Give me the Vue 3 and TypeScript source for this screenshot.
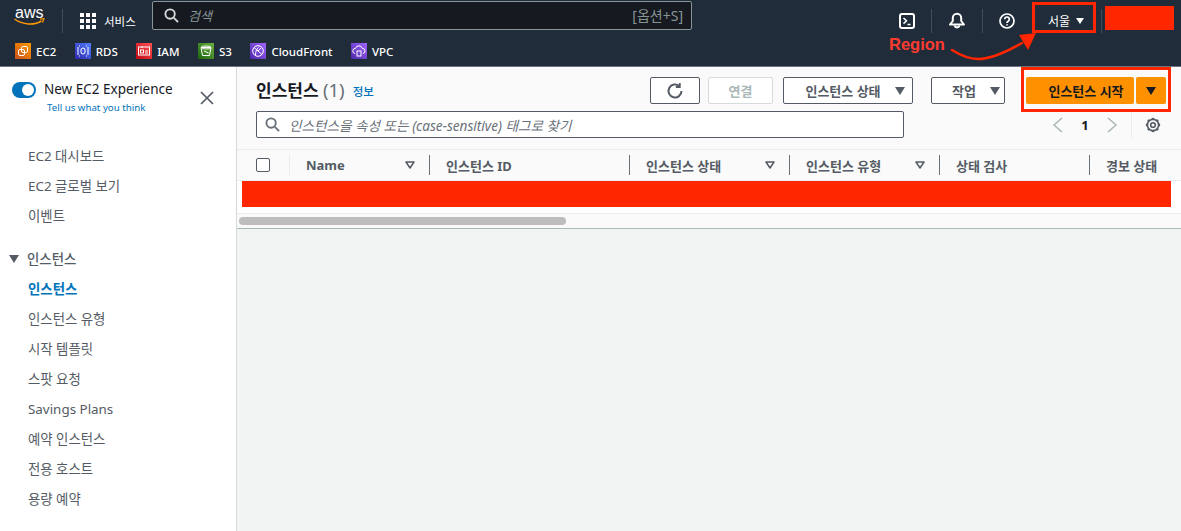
<script setup lang="ts">
interface Fav { label: string; from: string; to: string; kind: string }
const favs: Fav[] = [
  { label: 'EC2', from: '#c8511b', to: '#ff9900', kind: 'ec2' },
  { label: 'RDS', from: '#2e27ad', to: '#527fff', kind: 'rds' },
  { label: 'IAM', from: '#bd0816', to: '#ff5252', kind: 'iam' },
  { label: 'S3', from: '#1b660f', to: '#6cae3e', kind: 's3' },
  { label: 'CloudFront', from: '#4d27a8', to: '#a166ff', kind: 'cf' },
  { label: 'VPC', from: '#4d27a8', to: '#a166ff', kind: 'vpc' },
]
const navTop = ['EC2 대시보드', 'EC2 글로벌 보기', '이벤트']
const navInst = ['인스턴스 유형', '시작 템플릿', '스팟 요청', 'Savings Plans', '예약 인스턴스', '전용 호스트', '용량 예약']
const cols = [
  { label: 'Name', w: 140, sort: true },
  { label: '인스턴스 ID', w: 200, sort: false },
  { label: '인스턴스 상태', w: 160, sort: true },
  { label: '인스턴스 유형', w: 150, sort: true },
  { label: '상태 검사', w: 150, sort: false },
  { label: '경보 상태', w: 82, sort: false },
]
const gearTeeth = [0, 45, 90, 135, 180, 225, 270, 315]
</script>

<template>
  <div class="page">
    <header class="top">
      <div class="bar1">
        <svg class="aws" width="32" height="26" viewBox="0 0 32 26">
          <text x="1" y="14.500" class="awstext">aws</text>
          <path d="M.5 16c8 6 20 6.500 27 2" fill="none" stroke="#f90" stroke-width="1.500" />
          <path d="M26 16.200l4-.5-1.500 3.800" fill="none" stroke="#f90" stroke-width="1.200" />
        </svg>
        <span class="vsep sep1"></span>
        <svg class="grid" width="16" height="16" viewBox="0 0 16 16" fill="#fff">
          <rect x="0" y="0" width="4" height="4" /><rect x="6" y="0" width="4" height="4" /><rect x="12" y="0" width="4" height="4" />
          <rect x="0" y="6" width="4" height="4" /><rect x="6" y="6" width="4" height="4" /><rect x="12" y="6" width="4" height="4" />
          <rect x="0" y="12" width="4" height="4" /><rect x="6" y="12" width="4" height="4" /><rect x="12" y="12" width="4" height="4" />
        </svg>
        <span class="svc">서비스</span>
        <div class="gsearch">
          <svg width="15" height="15" viewBox="0 0 16 16" fill="none" stroke="#d5dbdb" stroke-width="2">
            <circle cx="6.500" cy="6.500" r="5" /><path d="M10.500 10.500l4.500 4.500" />
          </svg>
          <span class="gph">검색</span>
          <span class="gkey">[옵션+S]</span>
        </div>
        <svg class="ic ic-term" width="16" height="16" viewBox="0 0 16 16" fill="none" stroke="#fff" stroke-width="2">
          <rect x="1" y="1" width="14" height="14" rx="2" /><path d="M4.500 5l3 2.800-3 2.800M8.500 11.500h3" stroke-width="1.500" />
        </svg>
        <span class="vsep sep-a"></span>
        <svg class="ic" width="16" height="17" viewBox="0 0 16 17" fill="none" stroke="#fff" stroke-width="2">
          <path d="M1 12.500h14l-2.800-3.500V6a4.200 4.200 0 0 0-8.400 0v3z" stroke-linejoin="round" /><path d="M5.500 13.500a2.600 2.600 0 0 0 5 0" />
        </svg>
        <span class="vsep sep-b"></span>
        <svg class="ic" width="16" height="16" viewBox="0 0 16 16" fill="none" stroke="#fff" stroke-width="1.700">
          <circle cx="8" cy="8" r="7" /><path d="M5.700 6.300a2.300 2.300 0 1 1 3.500 2c-.8.500-1.200.9-1.200 1.700" /><path d="M8 11.200v1.300" />
        </svg>
        <span class="region">서울</span>
        <span class="caret-w"></span>
        <span class="vsep sep-last"></span>
        <span class="redact-user"></span>
      </div>
      <div class="bar2">
        <div v-for="f in favs" :key="f.label" class="fav">
          <svg width="16" height="16" viewBox="0 0 16 16">
            <defs>
              <linearGradient :id="'g' + f.kind" x1="0" y1="1" x2="1" y2="0">
                <stop offset="0" :stop-color="f.from" /><stop offset="1" :stop-color="f.to" />
              </linearGradient>
            </defs>
            <rect width="16" height="16" :fill="'url(#g' + f.kind + ')'" />
            <g fill="none" stroke="#fff" stroke-width="1">
              <g v-if="f.kind === 'ec2'"><rect x="6.500" y="3.500" width="6" height="6" rx="1.500" /><rect x="3.500" y="6.500" width="6" height="6" rx="1.500" /></g>
              <g v-else-if="f.kind === 'rds'"><rect x="6" y="5" width="4" height="6" rx="2" /><path d="M3 4v8M13 4v8M4 3h1M11 3h1M4 13h1M11 13h1" /></g>
              <g v-else-if="f.kind === 'iam'"><rect x="2.500" y="4" width="11" height="8" /><rect x="4.500" y="7" width="3" height="3" /><path d="M9 8h3M9 10h3M6 3v2" /></g>
              <g v-else-if="f.kind === 's3'"><path d="M3 4.500h10l-1.500 8h-7z" /><path d="M6 8l4.500 2" /><ellipse cx="8" cy="4.500" rx="5" ry="1.500" /></g>
              <g v-else-if="f.kind === 'cf'"><circle cx="8" cy="8" r="5.300" /><path d="M4 4.500l8 7M5.500 12c0-3 1-6 3-7.500M8 8l3-3" /></g>
              <g v-else><path d="M4 10.500a2.500 2.500 0 0 1 .5-5 3.500 3.500 0 0 1 6.800 0 2.500 2.500 0 0 1 .5 5" /><rect x="6" y="8" width="4" height="5" /></g>
            </g>
          </svg>
          <span>{{ f.label }}</span>
        </div>
      </div>
    </header>

    <div class="body">
      <aside class="side">
        <div class="exp">
          <span class="toggle"><span class="knob"></span></span>
          <div class="exp-text">
            <div class="exp-title">New EC2 Experience</div>
            <div class="exp-link">Tell us what you think</div>
          </div>
          <svg class="close" width="14" height="14" viewBox="0 0 14 14" fill="none" stroke="#545b64" stroke-width="1.700">
            <path d="M1 1l12 12M13 1L1 13" />
          </svg>
        </div>
        <nav class="nav">
          <a v-for="n in navTop" :key="n" class="item">{{ n }}</a>
          <div class="section"><span class="caret-d"></span>인스턴스</div>
          <a class="item active">인스턴스</a>
          <a v-for="n in navInst" :key="n" class="item">{{ n }}</a>
        </nav>
      </aside>

      <main class="main">
        <section class="panel">
          <div class="head">
            <div class="row1">
              <h1 class="title">인스턴스 <span class="count">(1)</span></h1>
              <a class="info">정보</a>
              <div class="actions">
                <button class="btn b-refresh">
                  <svg width="18" height="18" viewBox="0 0 18 18" fill="none" stroke="#545b64" stroke-width="2">
                    <path d="M15.500 9a6.500 6.500 0 1 1-2.200-4.900" /><path d="M13.800 1v4h-4" stroke-width="1.800" />
                  </svg>
                </button>
                <button class="btn b-conn">연결</button>
                <button class="btn b-state">인스턴스 상태<span class="caret-g"></span></button>
                <button class="btn b-act">작업<span class="caret-g"></span></button>
                <button class="btn-o b-launch">인스턴스 시작</button>
                <button class="btn-o b-drop"><span class="caret-k"></span></button>
              </div>
            </div>
            <div class="row2">
              <div class="filter">
                <svg width="15" height="15" viewBox="0 0 16 16" fill="none" stroke="#687078" stroke-width="2">
                  <circle cx="6.500" cy="6.500" r="5" /><path d="M10.500 10.500l4.500 4.500" />
                </svg>
                <span class="fph">인스턴스을 속성 또는 (case-sensitive) 태그로 찾기</span>
              </div>
              <div class="pager">
                <svg width="11" height="16" viewBox="0 0 11 16" fill="none" stroke="#aab7b8" stroke-width="1.500"><path d="M10 1L2 8l8 7" /></svg>
                <span class="pnum">1</span>
                <svg width="11" height="16" viewBox="0 0 11 16" fill="none" stroke="#aab7b8" stroke-width="1.500"><path d="M1 1l8 7-8 7" /></svg>
                <span class="psep"></span>
                <svg width="16" height="16" viewBox="0 0 16 16" fill="none" stroke="#545b64">
                  <circle cx="8" cy="8" r="2.300" stroke-width="1.600" />
                  <circle cx="8" cy="8" r="5.600" stroke-width="1.600" />
                  <path v-for="a in gearTeeth" :key="a" d="M8 .9v2" stroke-width="2.600" :transform="'rotate(' + a + ' 8 8)'" />
                </svg>
              </div>
            </div>
          </div>
          <div class="thead">
            <div class="cb-cell"><span class="cb"></span></div>
            <div v-for="c in cols" :key="c.label" class="th" :style="{ width: c.w + 'px' }">
              <span>{{ c.label }}</span>
              <svg v-if="c.sort" class="sort" width="10" height="8" viewBox="0 0 10 8" fill="none" stroke="#545b64" stroke-width="1.500"><path d="M1 1h8L5 7z" stroke-linejoin="round" /></svg>
            </div>
          </div>
          <div class="tbody"><div class="redact-row"></div></div>
          <div class="scroll"><div class="thumb"></div></div>
        </section>
      </main>
    </div>

    <div class="mark mark-region"></div>
    <div class="mark mark-launch"></div>
    <span class="region-label">Region</span>
    <svg class="arrow" width="92" height="34" viewBox="0 0 92 34" fill="none">
      <path d="M2 18c8 5 16 9 26 9 14 0 30-8 44-16" stroke="#ff2600" stroke-width="2.500" stroke-linecap="round" />
      <path d="M86 1L69 3l9 15z" fill="#ff2600" />
    </svg>
  </div>
</template>

<style>
html, body { margin: 0; padding: 0; background: #f2f3f3; }
</style>

<style scoped>
.page { position: relative; width: 1181px; height: 531px; overflow: hidden; font-family: "Noto Sans", "Noto Sans CJK KR", sans-serif; color: #16191f; background: #f2f3f3; }
.top { background: #212c3a; height: 67px; border-bottom: 1px solid #6b7580; box-sizing: border-box; }
.bar1 { height: 41px; display: flex; align-items: center; padding-left: 14px; box-sizing: border-box; }
.aws { margin-top: -9px; flex: none; }
.awstext { font: 16px "Liberation Sans", sans-serif; fill: #fff; }
.vsep { width: 1px; height: 24px; background: #414d5c; margin: 0 16px; flex: none; }
.sep1 { margin: 0 17px 0 16px; }
.sep-a { margin: 0 17px 0 16px; }
.sep-b { margin: 0 16px 0 17px; }
.grid { flex: none; }
.svc { color: #fff; font-size: 11.500px; margin-left: 8px; width: 31px; white-space: nowrap; }
.gsearch { margin-left: 17px; width: 540px; height: 29px; margin-top: -11px; box-sizing: border-box; background: #16191f; border: 1px solid #879596; border-radius: 2px; display: flex; align-items: center; padding: 0 8px 0 11px; }
.gph { margin-left: 9px; font-size: 13px; font-style: italic; color: #879596; }
.gkey { margin-left: auto; font-size: 14px; color: #879596; }
.ic { flex: none; }
.ic-term { margin-left: 207px; }
.region { color: #fff; font-size: 12px; margin-left: 33px; width: 28px; white-space: nowrap; }
.caret-w { width: 0; height: 0; border: 4.500px solid transparent; border-top: 6px solid #fff; border-bottom: 0; }
.sep-last { margin: 0 3px 0 17px; }
.redact-user { width: 69px; height: 24px; background: #ff2600; margin-top: -5px; flex: none; }
.bar2 { height: 25px; display: flex; align-items: flex-start; padding: 2px 0 0 15px; box-sizing: border-box; }
.fav { display: flex; align-items: center; gap: 5px; margin-right: 18.500px; color: #fff; font-size: 11.500px; font-weight: 500; height: 16px; }
.body { display: flex; height: 464px; }
.side { width: 237px; flex: none; box-sizing: border-box; background: #fff; border-right: 1px solid #d5dbdb; }
.exp { position: relative; height: 74px; padding: 13px 0 0 12px; display: flex; align-items: flex-start; box-sizing: border-box; }
.toggle { width: 24px; height: 16px; border-radius: 8px; background: #0073bb; position: relative; margin-top: 2px; flex: none; }
.knob { position: absolute; right: 2px; top: 2px; width: 12px; height: 12px; border-radius: 50%; background: #fff; }
.exp-text { margin-left: 8px; }
.exp-title { font-size: 13.500px; line-height: 19px; color: #16191f; white-space: nowrap; }
.exp-link { font-size: 9.700px; line-height: 14px; margin: 2px 0 0 3px; color: #0073bb; white-space: nowrap; }
.close { position: absolute; left: 200px; top: 24px; }
.nav { display: flex; flex-direction: column; }
.item { height: 30px; line-height: 30px; padding-left: 28px; font-size: 13.400px; color: #545b64; }
.section { height: 30px; line-height: 30px; margin-top: 13px; padding-left: 9px; font-size: 13.400px; color: #545b64; display: flex; align-items: center; font-weight: 500; }
.caret-d { width: 0; height: 0; border: 5px solid transparent; border-top: 8px solid #545b64; border-bottom: 0; margin-right: 8px; }
.active { color: #0073bb; font-weight: 700; }
.main { flex: 1; min-width: 0; }
.panel { background: #fafafa; height: 161px; border-bottom: 1px solid #aab7b8; box-sizing: content-box; }
.head { height: 83px; box-sizing: border-box; padding: 10px 15px 0 19px; border-bottom: 1px solid #eaeded; }
.row1 { display: flex; align-items: flex-start; height: 27px; }
.title { margin: 1px 0 0; font-size: 17px; line-height: 24px; font-weight: 700; }
.count { font-weight: 400; color: #687078; font-size: 18.500px; }
.info { font-size: 11.500px; margin: 6px 0 0 8px; color: #0073bb; font-weight: 500; }
.actions { margin-left: auto; display: flex; align-items: stretch; height: 27px; }
.btn { box-sizing: border-box; height: 27px; border: 1px solid #545b64; border-radius: 2px; background: #fff; color: #545b64; font: 700 13px "Noto Sans", "Noto Sans CJK KR", sans-serif; padding: 0; display: flex; align-items: center; justify-content: center; }
.b-refresh { width: 50px; margin-right: 8px; }
.b-conn { width: 65px; margin-right: 10px; border-color: #d5dbdb; color: #aab7b8; }
.b-state { width: 130px; margin-right: 18px; padding-left: 14px; }
.b-act { width: 74px; margin-right: 21px; padding-left: 16px; }
.caret-g { width: 0; height: 0; border: 5px solid transparent; border-top: 8px solid #545b64; border-bottom: 0; margin-left: 14px; }
.btn-o { border: 0; background: #ff9000; height: 27px; border-radius: 2px; color: #16191f; font: 700 13px "Noto Sans", "Noto Sans CJK KR", sans-serif; padding: 0; display: flex; align-items: center; justify-content: center; }
.b-launch { width: 108px; padding-left: 12px; }
.b-drop { width: 30px; margin-left: 2px; }
.caret-k { width: 0; height: 0; border: 5.500px solid transparent; border-top: 8px solid #16191f; border-bottom: 0; }
.row2 { margin-top: 7px; display: flex; align-items: flex-start; height: 27px; }
.filter { width: 648px; height: 27px; box-sizing: border-box; background: #fff; border: 1px solid #545b64; border-radius: 2px; display: flex; align-items: center; padding-left: 8px; flex: none; }
.fph { margin-left: 9px; font-size: 13.600px; font-style: italic; color: #687078; white-space: nowrap; }
.pager { display: flex; align-items: center; height: 27px; margin-left: 148px; }
.pnum { width: 44px; text-align: center; font-size: 13px; font-weight: 700; }
.psep { width: 1px; height: 27px; background: #eaeded; margin: 0 13px; }
.thead { display: flex; height: 31px; align-items: center; padding-left: 5px; border-bottom: 1px solid #eaeded; box-sizing: border-box; }
.cb-cell { width: 48px; height: 20px; flex: none; box-sizing: border-box; border-right: 1px solid #eaeded; padding: 3px 0 0 14px; }
.cb { display: block; width: 14px; height: 14px; box-sizing: border-box; border: 1px solid #545b64; border-radius: 2px; background: #fff; }
.th { height: 20px; flex: none; box-sizing: border-box; border-right: 1px solid #687078; display: flex; align-items: center; padding: 0 14px 0 16px; font-size: 13px; font-weight: 700; color: #545b64; white-space: nowrap; }
.th:last-child { border-right: 0; }
.sort { margin-left: auto; }
.tbody { height: 33px; background: #fff; box-sizing: border-box; padding: 0 10px 0 5px; border-bottom: 1px solid #eaeded; }
.redact-row { height: 26px; background: #ff2600; }
.scroll { height: 14px; padding: 3px 0 0 2px; box-sizing: border-box; }
.thumb { width: 327px; height: 8px; border-radius: 4px; background: #bdbdbd; }
.mark { position: absolute; box-sizing: border-box; border: 3px solid #ff2600; }
.mark-region { left: 1032px; top: 2px; width: 64px; height: 31px; }
.mark-launch { left: 1021px; top: 67px; width: 150px; height: 45px; }
.region-label { position: absolute; left: 889px; top: 34px; font: 700 16.500px/20px "Liberation Sans", sans-serif; color: #ff3b30; }
.arrow { position: absolute; left: 950px; top: 32px; }
</style>
